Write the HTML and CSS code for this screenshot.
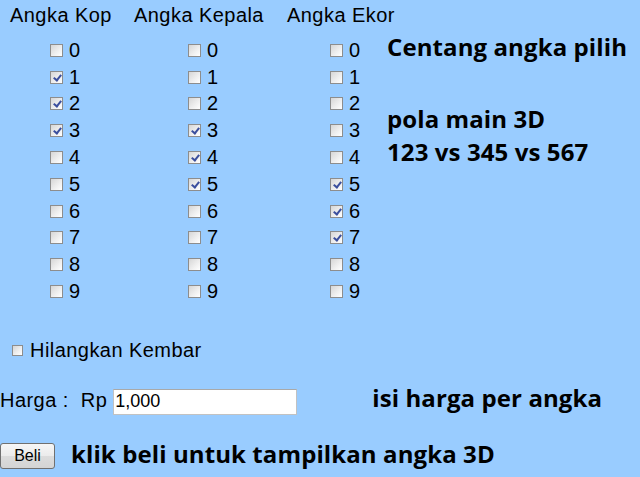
FILE: index.html
```
<!DOCTYPE html>
<html lang="id">
<head>
<meta charset="utf-8">
<title>Pola 3D</title>
<link rel="stylesheet" href="styles.css">
</head>
<body>
<main class="page">
  <section class="picker">
    <div class="group group--kop">
      <h2 class="group__title">Angka Kop</h2>
      <div class="digits">
        <label class="digit"><input type="checkbox" class="box"><span>0</span></label>
        <label class="digit"><input type="checkbox" class="box" checked><span>1</span></label>
        <label class="digit"><input type="checkbox" class="box" checked><span>2</span></label>
        <label class="digit"><input type="checkbox" class="box" checked><span>3</span></label>
        <label class="digit"><input type="checkbox" class="box"><span>4</span></label>
        <label class="digit"><input type="checkbox" class="box"><span>5</span></label>
        <label class="digit"><input type="checkbox" class="box"><span>6</span></label>
        <label class="digit"><input type="checkbox" class="box"><span>7</span></label>
        <label class="digit"><input type="checkbox" class="box"><span>8</span></label>
        <label class="digit"><input type="checkbox" class="box"><span>9</span></label>
      </div>
    </div>
    <div class="group group--kepala">
      <h2 class="group__title">Angka Kepala</h2>
      <div class="digits">
        <label class="digit"><input type="checkbox" class="box"><span>0</span></label>
        <label class="digit"><input type="checkbox" class="box"><span>1</span></label>
        <label class="digit"><input type="checkbox" class="box"><span>2</span></label>
        <label class="digit"><input type="checkbox" class="box" checked><span>3</span></label>
        <label class="digit"><input type="checkbox" class="box" checked><span>4</span></label>
        <label class="digit"><input type="checkbox" class="box" checked><span>5</span></label>
        <label class="digit"><input type="checkbox" class="box"><span>6</span></label>
        <label class="digit"><input type="checkbox" class="box"><span>7</span></label>
        <label class="digit"><input type="checkbox" class="box"><span>8</span></label>
        <label class="digit"><input type="checkbox" class="box"><span>9</span></label>
      </div>
    </div>
    <div class="group group--ekor">
      <h2 class="group__title">Angka Ekor</h2>
      <div class="digits">
        <label class="digit"><input type="checkbox" class="box"><span>0</span></label>
        <label class="digit"><input type="checkbox" class="box"><span>1</span></label>
        <label class="digit"><input type="checkbox" class="box"><span>2</span></label>
        <label class="digit"><input type="checkbox" class="box"><span>3</span></label>
        <label class="digit"><input type="checkbox" class="box"><span>4</span></label>
        <label class="digit"><input type="checkbox" class="box" checked><span>5</span></label>
        <label class="digit"><input type="checkbox" class="box" checked><span>6</span></label>
        <label class="digit"><input type="checkbox" class="box" checked><span>7</span></label>
        <label class="digit"><input type="checkbox" class="box"><span>8</span></label>
        <label class="digit"><input type="checkbox" class="box"><span>9</span></label>
      </div>
    </div>
    <div class="notes">
      <p class="hint notes__lead">Centang angka pilih</p>
      <p class="hint notes__pattern">pola main 3D<br>123 vs 345 vs 567</p>
    </div>
  </section>

  <label class="twin"><input type="checkbox" class="box box--small"><span>Hilangkan Kembar</span></label>

  <div class="price">
    <span class="price__label">Harga :&nbsp; Rp</span>
    <input type="text" class="price__input" value="1,000">
    <span class="hint price__hint">isi harga per angka</span>
  </div>

  <div class="buy">
    <button type="button" class="buy__btn">Beli</button>
    <span class="hint buy__hint">klik beli untuk tampilkan angka 3D</span>
  </div>
</main>
</body>
</html>
```
FILE: styles.css
```
* { box-sizing: border-box; }

body {
  margin: 0;
  background: #99ccff;
  color: #000;
  font-family: "Liberation Sans", Arial, sans-serif;
  font-size: 20px;
  line-height: 23px;
  letter-spacing: 0.45px;
}

.page {
  padding-top: 4px;
}

.picker {
  display: flex;
}

.group {
  display: flex;
  flex-direction: column;
  flex: none;
}

.group--kop { width: 124px; }
.group--kepala { width: 153px; }
.group--ekor { width: 100px; }

.group__title {
  margin: 0;
  padding-left: 10px;
  font-size: 20px;
  font-weight: normal;
  line-height: 23px;
  white-space: nowrap;
}

.digits {
  display: flex;
  flex-direction: column;
  margin-top: 10px;
}

.group--kop .digits { padding-left: 50px; }
.group--kepala .digits { padding-left: 64px; }
.group--ekor .digits { padding-left: 53px; }

.digit {
  display: flex;
  align-items: center;
  gap: 6px;
  height: 26.8px;
}

.box {
  appearance: none;
  -webkit-appearance: none;
  position: relative;
  flex: none;
  width: 13px;
  height: 13px;
  margin: 0;
  border: 1px solid #8d8d8d;
  background: linear-gradient(135deg, #d6d6d6 0%, #f0f0f0 60%, #ffffff 100%);
}

.box:checked::after {
  content: "";
  position: absolute;
  left: 3.5px;
  top: 1px;
  width: 3px;
  height: 6px;
  border: solid #3b4f9e;
  border-width: 0 2px 2px 0;
  transform: rotate(38deg);
}

.box--small {
  width: 11px;
  height: 11px;
}

.hint {
  margin: 0;
  font-family: "Open Sans", "Noto Sans", sans-serif;
  font-weight: 700;
  font-size: 24px;
  line-height: 33px;
  letter-spacing: 0.1px;
  white-space: nowrap;
}

.notes {
  padding-top: 26.2px;
  padding-left: 10px;
}

.notes__pattern {
  margin-top: 39px;
}

.twin {
  display: flex;
  align-items: center;
  gap: 7px;
  margin-top: 33.6px;
  padding-left: 12px;
}

.price {
  display: flex;
  align-items: flex-start;
  margin-top: 27.4px;
}

.price__label {
  white-space: nowrap;
}

.price__input {
  flex: none;
  width: 184px;
  height: 26px;
  margin: 0 0 0 6px;
  padding: 0 1px;
  border: 1px solid #c2c2c2;
  border-top-color: #a9a9a9;
  background: #fff;
  color: #000;
  font-family: "Liberation Sans", Arial, sans-serif;
  font-size: 18px;
  letter-spacing: 0;
  outline: none;
}

.price__hint {
  margin-left: 75px;
  margin-top: -8px;
}

.buy {
  display: flex;
  align-items: flex-start;
  margin-top: 28px;
}

.buy__btn {
  flex: none;
  width: 55px;
  height: 26px;
  margin: 0;
  padding: 0;
  border: 1px solid #707070;
  border-radius: 3px;
  background: linear-gradient(#f6f6f6 0%, #ebebeb 50%, #dcdcdc 51%, #d4d4d4 100%);
  color: #000;
  font-family: "Liberation Sans", Arial, sans-serif;
  font-size: 16px;
  letter-spacing: 0;
}

.buy__hint {
  margin-left: 16px;
  margin-top: -5.6px;
}
```
